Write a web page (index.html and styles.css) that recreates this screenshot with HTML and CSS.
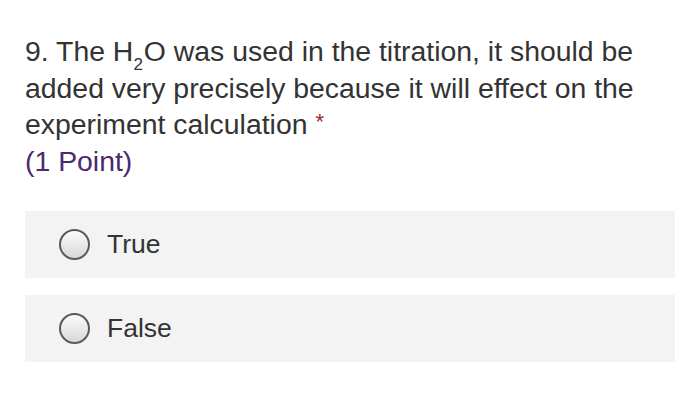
FILE: index.html
```html
<!DOCTYPE html>
<html>
<head>
<meta charset="utf-8">
<link rel="stylesheet" href="styles.css">
</head>
<body>
<div class="question">
  <div class="title">9. The H<sub>2</sub>O was used in the titration, it should be added very precisely because it will effect on the experiment calculation <span class="req">*</span></div>
  <div class="points">(1 Point)</div>
</div>
<div class="options">
  <label class="option"><span class="radio"></span><span class="label">True</span></label>
  <label class="option"><span class="radio"></span><span class="label">False</span></label>
</div>
</body>
</html>
```
FILE: styles.css
```css
html, body {
  margin: 0;
  padding: 0;
  background: #ffffff;
}
body {
  font-family: "Liberation Sans", Arial, sans-serif;
  color: #333333;
  padding: 33px 25px 0 25px;
  width: 650px;
}
.question {
  font-size: 28.4px;
  line-height: 36.5px;
}
.title {
  padding-right: 6px;
}
sub {
  font-size: 17px;
  line-height: 0;
  vertical-align: -9px;
  margin: 0 1px 0 0;
}
.req {
  color: #a4262c;
  font-size: 22px;
  line-height: 0;
  vertical-align: 5px;
}
.points {
  color: #4b2a6e;
}
.options {
  margin-top: 32px;
  display: flex;
  flex-direction: column;
  gap: 17px;
}
.option {
  display: flex;
  align-items: center;
  height: 67px;
  background: #f3f3f3;
  padding-left: 34px;
  font-size: 26.5px;
}
.radio {
  width: 27px;
  height: 27px;
  border-radius: 50%;
  border: 2px solid #5a5a5a;
  background: linear-gradient(#fbfbfb, #d8d8d8);
  flex: none;
}
.label {
  margin-left: 17px;
}
```
